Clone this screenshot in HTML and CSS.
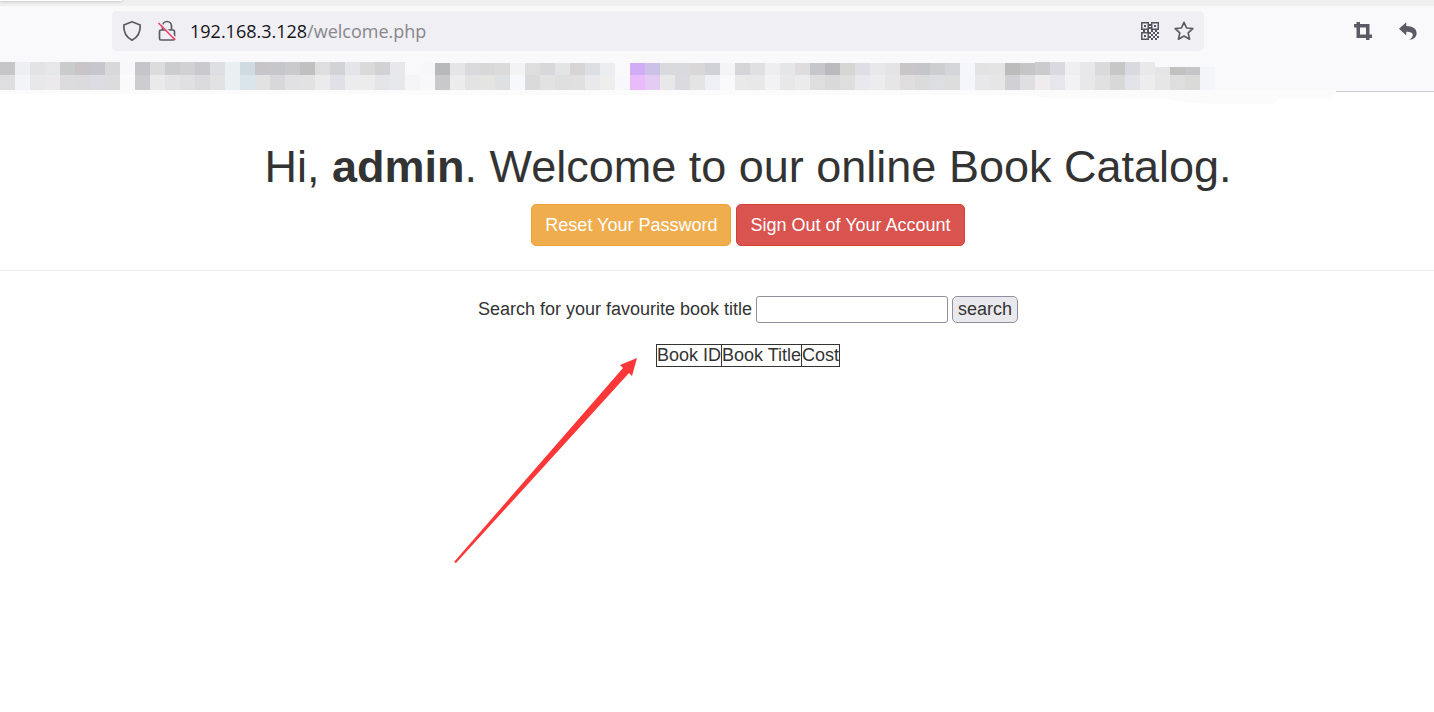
FILE: index.html
```
<!DOCTYPE html>
<html lang="en">
<head>
  <meta charset="UTF-8">
  <title>Welcome</title>
  <meta name="viewport" content="width=device-width, initial-scale=1.0">
  <link rel="stylesheet" href="styles.css">
</head>
<body>
  <!-- BROWSER BAR -->
  <header class="browser">
    <div class="tabs"><div class="tab"></div></div>
    <div class="toolbar">
      <div class="urlbar">
        <button class="icon-btn" type="button" aria-label="Tracking protection">
          <svg width="20" height="22" viewBox="0 0 20 22" fill="none" stroke="#5b5b66" stroke-width="1.7" stroke-linejoin="round"><path d="M10 1.7 18.2 5c.3 6.2-1.5 11.8-8.200 15.200C3.300 16.800 1.500 11.200 1.800 5z"/></svg>
        </button>
        <button class="icon-btn" type="button" aria-label="Connection not secure">
          <svg width="20" height="22" viewBox="0 0 20 22" fill="none" stroke="#5b5b66" stroke-width="1.7"><path d="M5.500 10V6a4.500 4.500 0 0 1 9 0v4M4 10h12a1.500 1.500 0 0 1 1.500 1.500v7A1.500 1.500 0 0 1 16 20H4a1.500 1.500 0 0 1-1.500-1.500v-7A1.500 1.500 0 0 1 4 10z"/><path d="M2.500 2 19 18.500" stroke="#f0eff4" stroke-width="1.5"/><path d="M1.500 3 18.200 20" stroke="#f5446a" stroke-width="1.7"/></svg>
        </button>
        <div class="url" role="textbox" aria-label="Address" tabindex="0">192.168.3.128<span class="path">/welcome.php</span></div>
        <button class="icon-btn" type="button" aria-label="QR code">
          <svg width="18" height="18" viewBox="0 0 18 18" fill="#55555f"><path fill-rule="evenodd" d="M0 0h8v8H0zM1.500 1.500v5h5v-5zM10 0h8v8h-8zM11.500 1.500v5h5v-5zM0 10h8v8H0zM1.500 11.500v5h5v-5z"/><path d="M3 3h2v2H3zM13 3h2v2h-2zM3 13h2v2H3zM8 2h2v2H8zM8 5h2v2H8zM2 8h2v2H2zM6 8h2v2H6zM8 10h2v2H8zM10 8h2v2h-2zM14 8h2v2h-2zM12 10h2v2h-2zM16 10h2v2h-2zM10 12h2v2h-2zM14 12h2v2h-2zM8 14h2v2H8zM12 14h2v2h-2zM16 14h2v2h-2zM10 16h2v2h-2zM14 16h2v2h-2z"/></svg>
        </button>
        <button class="icon-btn" type="button" aria-label="Bookmark this page">
          <svg width="20" height="20" viewBox="0 0 20 20" fill="none" stroke="#5b5b66" stroke-width="1.7" stroke-linejoin="round"><path d="M10 1.300 12.600 7l6.200.7-4.600 4.200 1.300 6.300L10 15.100l-5.500 3.100 1.300-6.300L1.200 7.700 7.400 7z"/></svg>
        </button>
      </div>
      <div class="tools">
        <button class="icon-btn" type="button" aria-label="Screenshot">
          <svg width="18" height="18" viewBox="0 0 18 18" fill="#5b5b66"><path fill-rule="evenodd" d="M2.500 0H6v2h9.500v10.500H18V16h-2.500v2H12v-2H2.500V5.500H0V2h2.500zM6 5.500v7h6v-7z"/></svg>
        </button>
        <button class="icon-btn" type="button" aria-label="Undo">
          <svg width="18" height="18" viewBox="0 0 18 18" fill="#5b5b66"><path d="M0 6.700 7.300.3V4C14 4 17.600 7 17.600 11.200c0 3.500-2.500 6.300-7.400 6.600 2.300-1.500 3.600-3 3.600-4.800 0-2.300-2.500-3.200-6.500-3.200v3.700z"/></svg>
        </button>
      </div>
    </div>
    <svg class="bookmarks" id="bookmarks" width="1215" height="29" viewBox="0 0 1215 29" shape-rendering="crispEdges"></svg>
    <svg class="smudge" width="1336" height="15" viewBox="0 0 1336 15" fill="#fbfbfb"><path d="M0 0H1336V3q-4 5-12 5H1278q-1 6-8 6H1215Q1185 13 1168 9L1150 8H1050L1020 5H410V4H0z"/></svg>
  </header>

  <!-- PAGE -->
  <main>
    <section class="page-header">
      <h1>Hi, <b>admin</b>. Welcome to our online Book Catalog.</h1>
      <div class="actions">
        <a class="btn btn-warning" href="#">Reset Your Password</a>
        <a class="btn btn-danger" href="#">Sign Out of Your Account</a>
      </div>
    </section>

    <section class="content">
      <form class="search">
        <label for="title">Search for your favourite book title</label>
        <input type="text" id="title" name="title">
        <button type="submit">search</button>
      </form>

      <div class="results">
        <table>
          <tr><th>Book ID</th><th>Book Title</th><th>Cost</th></tr>
        </table>
        <svg class="arrow" width="184" height="206" viewBox="0 0 184 206" fill="#fc3737"><path d="M183 0 178 18 175 15 2 205 0 204 169 10 166 7z"/></svg>
      </div>
    </section>
  </main>

  <script src="bookmarks.js"></script>
</body>
</html>
```

FILE: styles.css
```
* {
  box-sizing: border-box;
}

body {
  margin: 0;
  min-height: 100vh;
  font-family: "Liberation Sans", Arial, sans-serif;
  font-size: 18px;
  line-height: 25px;
  color: #333;
  background: #fff;
}

/* BROWSER BAR */
.browser {
  position: relative;
  background: #f9f9fb;
  border-bottom: 1px solid #ccc;
}

.tabs {
  height: 6px;
  background: #efefef;
  overflow: hidden;
}

.tab {
  width: 122px;
  height: 1px;
  background: #fff;
  box-shadow: 0 0 3px #777;
}

.toolbar {
  display: flex;
  align-items: center;
  padding: 5px 17px 0 112px;
}

.urlbar {
  flex: 1;
  display: flex;
  align-items: center;
  gap: 15px;
  height: 40px;
  padding: 0 10px;
  background: #f0eff4;
  border-radius: 5px;
}

.icon-btn {
  display: flex;
  padding: 0;
  border: none;
  background: none;
}

.url {
  flex: 1;
  margin-left: -2px;
  font-family: "Open Sans", "Noto Sans", sans-serif;
  font-size: 18px;
  color: #15141a;
  white-space: nowrap;
}

.path {
  color: #87868c;
}

.tools {
  display: flex;
  gap: 27px;
  margin-left: 150px;
}

.bookmarks {
  display: block;
  margin-top: 11px;
  max-width: 100%;
}

.smudge {
  position: absolute;
  left: 0;
  top: 90px;
  max-width: 100%;
}

/* PAGE */
main {
  text-align: center;
}

.page-header {
  padding: 50px 0 24px 62px;
  border-bottom: 1px solid #eee;
}

h1 {
  margin: 0 0 12px;
  font-size: 45px;
  font-weight: 500;
  line-height: 50px;
}

.actions {
  display: flex;
  justify-content: center;
  gap: 5px;
}

.btn {
  padding: 8px 13px;
  line-height: 24px;
  color: #fff;
  text-decoration: none;
  border: 1px solid;
  border-radius: 5px;
}

.btn-warning {
  background: #f0ad4e;
  border-color: #eea236;
}

.btn-danger {
  background: #d9534f;
  border-color: #d43f3a;
}

.content {
  padding: 25px 0 0 62px;
}

.search {
  display: flex;
  justify-content: center;
  align-items: center;
  gap: 4px;
}

.search input {
  width: 192px;
  height: 27px;
  padding: 1px 3px;
  font: inherit;
  border: 1px solid #8f8f9d;
  border-radius: 3px;
}

.search button {
  height: 27px;
  padding: 0 5px;
  font: inherit;
  color: #333;
  background: #e9e9ed;
  border: 1px solid #8f8f9d;
  border-radius: 5px;
}

.results {
  position: relative;
  margin-top: 21px;
  min-height: 240px;
}

table {
  margin: 0 auto;
  border-collapse: collapse;
}

th {
  padding: 0;
  font-weight: normal;
  line-height: 21px;
  border: 1px solid #333;
}

/* pointer drawn over the page, ends beside the table */
.arrow {
  position: absolute;
  right: 50%;
  top: 14px;
  margin-right: 110px;
}

@media (max-width: 900px) {
  .page-header,
  .content {
    padding-left: 0;
  }
}
```

FILE: bookmarks.js
```
// pixelated bookmarks: one "top bottom" colour pair per column
const columns = `
c6c6c8 dedee0,eeeff3 f3f4f7,e3e3e5 e8e8ea,e7e7e9 ebe9ec,cacccb dcdcde,c8c4c8 dbdadc,c6c7ce dbdde2,d8d8da dcdcde,
f8f8fa fafafb,c6c5ca cdccd1,dcdcdc eaeaea,cccdd1 e3e3e8,d1d1d3 e0e0e2,cac9ce dbdadd,dedfe2 e2e2e4,eaeff2 eaeff2,
cfdbe0 dae5eb,c8c5c9 e2e2e2,c6c7ca d8d8da,cacacc e1e1e3,c0c0c0 e2e2e3,dedee1 ebebed,d2d3d7 dfe1e6,e4e5ea ececee,
dadada ececed,d2d2d4 e4e5e9,e7e8eb e7e8eb,f9f9fb f5f5f7,f7f7f9 f8f8fa,b8b9bb c9c9cb,e5e5e7 ececec,dadadc e3e3e4,
d8d8d9 e4e4e3,dbdbdc dfe0e1,f3f3f5 f7f8fb,dededd dadadb,d8d8da e2e2e3,e2e4e5 dfdfe0,d7d4d5 e2dfe1,dddee3 e9e9eb,
ebedf1 eeeeed,f9f9fb f6f8fc,d1adf5 e9bbfb,ccc1e8 e3cbf4,dadadc e8e8e8,d8dadd dadae0,dad7d8 e4e4e4,d1d2d8 eff0f5,
f4f4f6 f9f9fb,d5d5d7 e9e9ea,e0e0e2 e8e8e9,eeeef0 f2f2f4,e5e6e8 e8e8e9,dfdcdd ebebed,c6c7cb dededf,b9b9be d9d9da,
d6d6d5 dededf,dddfe5 e7e9ee,e8e8ea ececee,e4e4e6 e6e6e7,cac6c8 e1dddf,c5c6cb dbdbdc,cdcecf dcdee2,d3d5d8 dddddd,
f5f6fb f4f6fb,e3e3e4 e8e8ea,e4e4e5 e6e6e7,bcbcbc d1d0d5,c5c5c7 dfdfe1,cacbcc f0ecee,d9d9df e5e7ec,efeff1 f2f2f4,
e8e8ea e8e8ea,dadadc e1e1e2,c7c7c8 d8d8d8,d8dadf e2e4e9,e9e9eb ededee,e5e5e6 e6e6e7,c1c1c0 dedede,c6c5ca dadad9,
f4f5f9 f4f5f9`;

const svg = document.getElementById("bookmarks");

function addCell(x, y, height, color) {
  const rect = document.createElementNS("http://www.w3.org/2000/svg", "rect");
  rect.setAttribute("x", x);
  rect.setAttribute("y", y);
  rect.setAttribute("width", 15);
  rect.setAttribute("height", height);
  rect.setAttribute("fill", "#" + color);
  svg.appendChild(rect);
}

columns.trim().split(",").forEach((pair, i) => {
  const [top, bottom] = pair.trim().split(" ");
  // the strip's upper edge is uneven
  let y = 0;
  if (i > 27 && i < 69) y = 1;
  if (i > 76) y = 5;
  addCell(i * 15, y, 13 - y, top);
  addCell(i * 15, 13, 15, bottom);
});
```
